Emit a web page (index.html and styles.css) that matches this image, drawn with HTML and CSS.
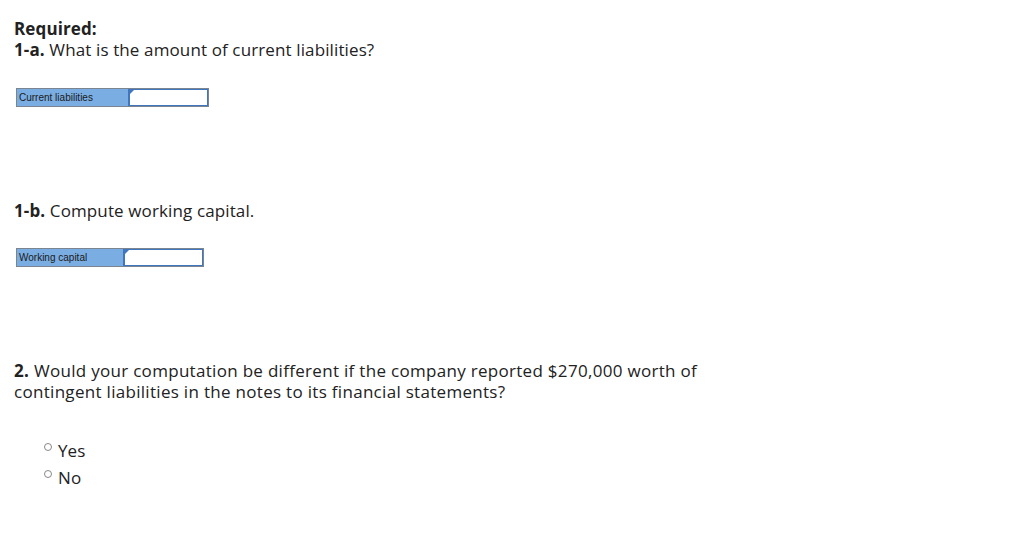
FILE: index.html
```html
<!DOCTYPE html>
<html>
<head>
<meta charset="utf-8">
<link rel="stylesheet" href="styles.css">
</head>
<body>
<div class="page">
  <p class="q"><strong>Required:</strong><br><strong>1-a.</strong> What is the amount of current liabilities?</p>
  <div class="entry e1">
    <div class="label">Current liabilities</div>
    <div class="input"><span class="tri"></span></div>
  </div>
  <p class="q q2"><strong>1-b.</strong> Compute working capital.</p>
  <div class="entry e2">
    <div class="label">Working capital</div>
    <div class="input"><span class="tri"></span></div>
  </div>
  <p class="q q3"><strong>2.</strong> Would your computation be different if the company reported $270,000 worth of<br>contingent liabilities in the notes to its financial statements?</p>
  <div class="opts">
    <div class="opt"><span class="radio"></span><span class="opt-text">Yes</span></div>
    <div class="opt"><span class="radio"></span><span class="opt-text">No</span></div>
  </div>
</div>
</body>
</html>
```
FILE: styles.css
```css
html, body { margin: 0; padding: 0; background: #fff; }
body { font-family: "Open Sans", Lato, sans-serif; color: #222; font-size: 17px; letter-spacing: 0.12px; }
.page { padding: 18px 0 0 14px; }
.q { margin: 0; line-height: 21px; }
.q strong { font-weight: 700; }
.q3 { letter-spacing: 0.3px; }
.entry { display: flex; margin: 28px 0 0 2px; height: 19px; border: 1px solid #7a8591; box-sizing: border-box; letter-spacing: 0; }
.e1 { width: 193px; }
.e2 { width: 188px; margin-top: 27px; }
.label { background: #7aaee3; font-family: "Liberation Sans", Arial, sans-serif; font-size: 10px; color: #1a1a1a; line-height: 17px; padding-left: 2px; box-sizing: border-box; }
.e1 .label { width: 111px; }
.e2 .label { width: 106px; }
.input { flex: 1; background: #fff; border: 1px solid #3f76bd; border-left-width: 2px; position: relative; }
.tri { position: absolute; left: 0; top: 0; width: 0; height: 0; border-top: 4px solid #3f76bd; border-right: 4px solid transparent; }
.q2 { margin-top: 93px; }
.q3 { margin-top: 93px; }
.opts { margin-top: 38px; padding-left: 30px; display: flex; flex-direction: column; gap: 5px; }
.opt { display: flex; align-items: flex-start; }
.radio { width: 8px; height: 8px; border: 1px solid #888; border-radius: 50%; box-sizing: border-box; margin: 3px 6px 0 0; }
.opt-text { line-height: 22px; }
```
